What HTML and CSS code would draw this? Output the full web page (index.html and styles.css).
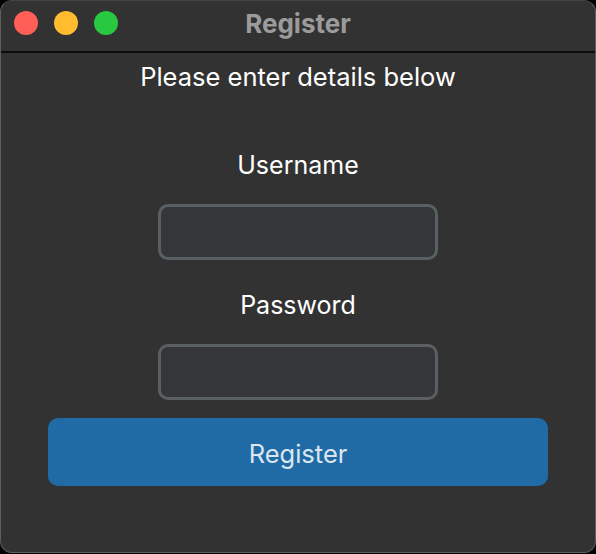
FILE: index.html
```html
<!DOCTYPE html>
<html lang="en">
<head>
  <meta charset="UTF-8" />
  <title>Register</title>
  <link rel="stylesheet" href="styles.css">
</head>
<body>
  <div class="window">
    <div class="titlebar">
      <div class="lights">
        <span class="light red"></span>
        <span class="light yellow"></span>
        <span class="light green"></span>
      </div>
      <div class="title">Register</div>
    </div>

    <div class="content">
      <p class="intro">Please enter details below</p>

      <div class="field">
        <label for="username">Username</label>
        <input type="text" id="username" />
      </div>

      <div class="field">
        <label for="password">Password</label>
        <input type="password" id="password" />
      </div>

      <button type="button">Register</button>
    </div>
  </div>
</body>
</html>
```

FILE: styles.css
```css
* {
  box-sizing: border-box;
}

html, body {
  margin: 0;
  padding: 0;
  width: 596px;
  height: 554px;
  background: #000;
  font-family: 'Inter', 'Roboto', sans-serif;
}

.window {
  width: 596px;
  height: 553px;
  background: #323232;
  border: 1px solid #5e5e5e;
  border-top-color: #444;
  border-radius: 12px;
  overflow: hidden;
  display: flex;
  flex-direction: column;
}

.titlebar {
  position: relative;
  height: 52px;
  flex-shrink: 0;
  border-bottom: 2px solid #0c0c0c;
  display: flex;
  align-items: center;
  justify-content: center;
}

.lights {
  position: absolute;
  left: 13px;
  top: 10px;
  display: flex;
  gap: 16px;
}

.light {
  width: 24px;
  height: 24px;
  border-radius: 50%;
}

.red { background: #ff5f57; }
.yellow { background: #febc2e; }
.green { background: #28c840; }

.title {
  color: #9b9b9b;
  font-size: 26px;
  font-weight: 700;
  margin-top: -6px;
}

.content {
  display: flex;
  flex-direction: column;
  align-items: center;
  padding: 0 47px;
}

.intro {
  margin: 9px 0 0;
  color: #fff;
  font-size: 25.5px;
  line-height: 30px;
}

.field {
  display: flex;
  flex-direction: column;
  align-items: center;
}

.field label {
  color: #fff;
  font-size: 25px;
  line-height: 30px;
  margin-top: 58px;
}

.field:last-of-type label {
  margin-top: 30px;
}

.field input {
  margin-top: 24px;
  width: 280px;
  height: 56px;
  background: #35363a;
  border: 3px solid #5a6062;
  border-radius: 10px;
  outline: none;
}

button {
  margin-top: 18px;
  width: 100%;
  height: 68px;
  padding-top: 4px;
  background: #206ba6;
  color: #dbe6f0;
  font-family: inherit;
  font-size: 25.5px;
  border: none;
  border-radius: 10px;
}
```
